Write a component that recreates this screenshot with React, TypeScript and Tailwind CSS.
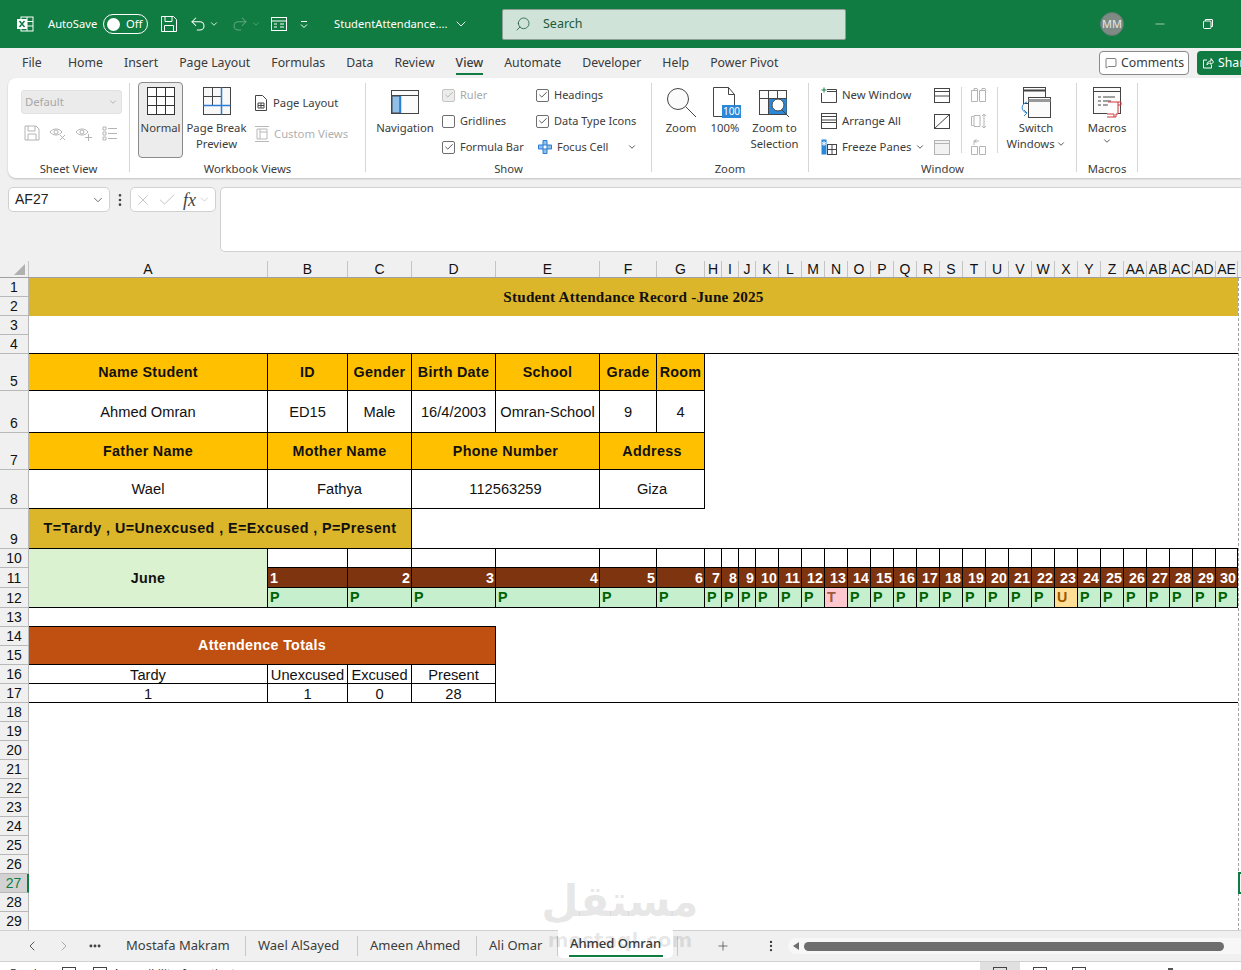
import { ChevronDown, ChevronLeft, ChevronRight, Check, X, Plus, Search, Undo2, Redo2, Minus, MoreHorizontal, MoreVertical, MessageSquare } from "lucide-react";
import type { ReactNode } from "react";

const tabs = ["Home", "Insert", "Page Layout", "Formulas", "Data", "Review", "View", "Automate", "Developer", "Help", "Power Pivot"];
const columns = ["A", "B", "C", "D", "E", "F", "G", "H", "I", "J", "K", "L", "M", "N", "O", "P", "Q", "R", "S", "T", "U", "V", "W", "X", "Y", "Z", "AA", "AB", "AC", "AD", "AE"];
const rowHeights = [19, 19, 19, 19, 37, 42, 37, 39, 40, 19, 20, 20, 19, 19, 19, 19, 19, 19, 19, 19, 19, 19, 19, 19, 19, 19, 19, 19, 19];
const days = Array.from({ length: 30 }, (_, i) => i + 1);
const sheets = [
  { name: "Mostafa Makram", width: "w-[132px]" },
  { name: "Wael AlSayed", width: "w-[112px]" },
  { name: "Ameen Ahmed", width: "w-[119px]" },
  { name: "Ali Omar", width: "w-[81px]" },
];

function Grey({ children }: { children: ReactNode }) {
  return <svg width="18" height="18" viewBox="0 0 18 18" fill="none" stroke="#b4b4b4" strokeWidth="1">{children}</svg>;
}

function Big({ icon, lines, className }: { icon: ReactNode; lines: ReactNode[]; className: string }) {
  return (
    <div className={`flex flex-col items-center pt-[4px] ${className}`}>
      <div className="h-[33px] flex items-start justify-center">{icon}</div>
      {lines.map((l, i) => (
        <div key={i} className="leading-[16px] whitespace-nowrap flex items-center">{l}</div>
      ))}
    </div>
  );
}

function Box({ checked, disabled }: { checked?: boolean; disabled?: boolean }) {
  return (
    <span className={`w-[13px] h-[13px] rounded-[2px] border flex items-center justify-center shrink-0 ${disabled ? "border-[#c4c4c4] bg-[#ececec] text-[#a8a8a8]" : "border-[#6e6e6e] text-[#333]"}`}>
      {checked && <Check size={10} strokeWidth={2} />}
    </span>
  );
}

function CheckRow({ label, checked, disabled }: { label: string; checked?: boolean; disabled?: boolean }) {
  return (
    <div className={`h-[26px] flex items-center gap-[5px] whitespace-nowrap text-[11px] ${disabled ? "text-[#a8a8a8]" : ""}`}>
      <Box checked={checked} disabled={disabled} />
      {label}
    </div>
  );
}

function Group({ label, className, children }: { label: string; className: string; children: ReactNode }) {
  return (
    <div className={`h-[89px] border-r border-[#d6d6d6] shrink-0 ${className}`}>
      <div className="h-[76px] flex">{children}</div>
      <div className="h-[18px] leading-[18px] pt-px text-center whitespace-nowrap">{label}</div>
    </div>
  );
}

function TitleBar() {
  return (
    <div className="h-[48px] bg-[#107c41] flex items-center text-white text-[11.200px] shrink-0">
      <svg className="ml-[16px] shrink-0" width="18" height="18" viewBox="0 0 18 18" fill="none">
        <rect x="5" y="2" width="12" height="14" fill="none" stroke="#fff" />
        <path d="M5 6.500h12M5 11h12M11 2v14" stroke="#fff" />
        <rect x="1" y="4" width="10" height="10" fill="#fff" />
        <path d="M3.500 6l5 6M8.500 6l-5 6" stroke="#107c41" strokeWidth="1.500" />
      </svg>
      <span className="ml-[14px] w-[55px] shrink-0">AutoSave</span>
      <div className="w-[45px] h-[20px] rounded-full border border-white flex items-center pl-[3px] shrink-0">
        <span className="w-[13px] h-[13px] rounded-full bg-white" />
        <span className="ml-[6px]">Off</span>
      </div>
      <svg className="ml-[12px] shrink-0" width="18" height="18" viewBox="0 0 18 18" fill="none" stroke="#fff">
        <path d="M1.500 1.500h12l3 3v12h-15z" />
        <path d="M5 1.500v5h7v-5M4.500 16.500v-6h9v6" />
      </svg>
      <Undo2 className="ml-[11px] shrink-0" size={18} strokeWidth={1.400} />
      <ChevronDown className="ml-[2px] shrink-0" size={10} />
      <Redo2 className="ml-[12px] text-[#5fa683] shrink-0" size={18} strokeWidth={1.400} />
      <ChevronDown className="ml-[2px] text-[#5fa683] shrink-0" size={10} />
      <svg className="ml-[9px] shrink-0" width="18" height="18" viewBox="0 0 18 18" fill="none" stroke="#fff">
        <rect x="1.500" y="2.500" width="15" height="13" />
        <path d="M1.500 6h15M4 9h3M10 9h4M4 12h3M10 12h4" />
      </svg>
      <svg className="ml-[10px] shrink-0" width="12" height="12" viewBox="0 0 12 12" fill="none" stroke="#fff">
        <path d="M3 3.500h6M3 6.500l3 3 3-3" />
      </svg>
      <span className="ml-[24px] w-[119px] shrink-0 whitespace-nowrap">StudentAttendance....</span>
      <ChevronDown className="shrink-0" size={16} strokeWidth={1.400} />
      <div className="ml-[33px] w-[344px] h-[31px] bg-[#cfe3d8] border border-[#8f9f97] rounded-[2px] flex items-center text-[#205a3c] text-[12.500px] shrink-0">
        <Search className="ml-[12px] -scale-x-100" size={16} strokeWidth={1.200} />
        <span className="ml-[12px]">Search</span>
      </div>
      <div className="ml-[254px] w-[24px] h-[24px] rounded-full bg-[#7f8a84] border border-[#5d7a69] flex items-center justify-center text-[11px] text-[#e6e6e6] shrink-0">MM</div>
      <Minus className="ml-[29px] shrink-0" size={14} strokeWidth={1} />
      <svg className="ml-[35px] shrink-0" width="12" height="12" viewBox="0 0 12 12" fill="none" stroke="#fff">
        <rect x="1.500" y="3" width="7.500" height="7.500" rx="1" />
        <path d="M3.500 3V1.500h6.500a.5.5 0 0 1 .5.5v6.500H9" />
      </svg>
    </div>
  );
}

function TabRow() {
  return (
    <div className="h-[30px] flex items-center text-[12.300px] text-[#3a3a3a] shrink-0">
      <span className="ml-[22px] w-[46px] shrink-0">File</span>
      <div className="flex gap-[21px] w-[1031px] h-[27px] self-start shrink-0">
        {tabs.map((t) => (
          <span key={t} className={`h-[27px] leading-[30px] ${t === "View" ? "border-b-[2px] border-[#107c41] font-medium" : ""}`}>{t}</span>
        ))}
      </div>
      <div className="h-[24px] w-[90px] bg-white border border-[#8a8a8a] rounded-[4px] flex items-center pl-[5px] gap-[4px] shrink-0">
        <MessageSquare size={12} strokeWidth={1.300} />
        Comments
      </div>
      <div className="ml-[8px] h-[24px] w-[60px] bg-[#107c41] rounded-l-[4px] flex items-center pl-[5px] gap-[4px] text-white shrink-0">
        <svg width="12" height="12" viewBox="0 0 12 12" fill="none" stroke="#fff"><path d="M5 3H1.500v8h8V8M5 8c0-3 2-4 4-4V1.500L11.500 5 9 7.500V6C7 6 5.500 7 5 8z" /></svg>
        Share
      </div>
    </div>
  );
}

function Ribbon() {
  return (
    <div className="ml-[8px] h-[100px] bg-white rounded-l-[8px] shadow-[0_1px_2px_rgba(0,0,0,0.2)] flex items-start pt-[5px] text-[11.300px] text-[#3c3c3c] font-normal shrink-0">
      <Group label="Sheet View" className="w-[122px]">
        <div>
          <div className="ml-[13px] mt-[7px] w-[101px] h-[24px] rounded-[3px] bg-[#ebebeb] border border-[#e2e2e2] text-[#a8a8a8] flex items-center justify-between px-[3px]">
            Default
            <ChevronDown size={10} />
          </div>
          <div className="mt-[8px] ml-[11px] flex">
            <div className="w-[26px] h-[22px] flex items-center justify-center"><Grey><path d="M2 2h11l3 3v11H2zM5 2v5h7V2M5 16v-6h8v6" /></Grey></div>
            <div className="w-[26px] h-[22px] flex items-center justify-center"><Grey><path d="M1 8c3-4 9-4 12 0-3 4-9 4-12 0z" /><circle cx="7" cy="8" r="2" /><path d="M11 11l5 5M16 11l-5 5" /></Grey></div>
            <div className="w-[26px] h-[22px] flex items-center justify-center"><Grey><path d="M1 8c3-4 9-4 12 0-3 4-9 4-12 0z" /><circle cx="7" cy="8" r="2" /><path d="M13.500 10v7M10 13.500h7" /></Grey></div>
            <div className="w-[26px] h-[22px] flex items-center justify-center"><Grey><path d="M2 3h3v3H2zM2 8h3v3H2zM2 13h3v3H2zM7 4.500h9M7 9.500h9M7 14.500h9" /></Grey></div>
          </div>
        </div>
      </Group>

      <Group label="Workbook Views" className="w-[236px]">
        <div className="ml-[8px] -mt-px w-[45px] h-[76px] shrink-0 bg-[#ececec] border border-[#8a8a8a] rounded-[4px] flex flex-col items-center pt-[4px]">
          <svg width="30" height="30" viewBox="0 0 30 30" fill="none" stroke="#333"><rect x="1.500" y=".5" width="27" height="27" fill="#fff" /><path d="M10.500 .5v27M19.500 .5v27M1.500 9.500h27M1.500 18.500h27" /></svg>
          <span className="mt-[3px] leading-[16px]">Normal</span>
        </div>
        <Big
          className="ml-[4px] w-[59px]"
          lines={["Page Break", "Preview"]}
          icon={<svg width="30" height="30" viewBox="0 0 30 30" fill="none" stroke="#444"><rect x="1.500" y=".5" width="27" height="27" fill="#f8f8f8" /><path d="M10.500 .5v18M1.500 9.500h18" /><path d="M19.500 .5v27M1.500 18.500h27" stroke="#2b7cd3" strokeWidth="1.500" /></svg>}
        />
        <div className="ml-[9px] mt-[7px]">
          <div className="h-[26px] flex items-center gap-[6px] whitespace-nowrap">
            <svg width="12" height="16" viewBox="0 0 12 16" fill="none" stroke="#444"><path d="M.5.500h7l4 4v11H.5z" /><path d="M3 8h6v5H3zM6 8v5M3 10.500h6" /></svg>
            Page Layout
          </div>
          <div className="h-[26px] flex items-center gap-[4px] text-[#b0b0b0] -ml-[1px] mt-[5px] whitespace-nowrap">
            <svg width="16" height="18" viewBox="0 0 16 18" fill="none" stroke="#b8b8b8"><path d="M1 1.500h14M1 16.500h14M3 4h10v10H3zM6 4v10M6 7h7" /></svg>
            Custom Views
          </div>
        </div>
      </Group>

      <Group label="Show" className="w-[286px]">
        <Big
          className="ml-[10px] w-[58px]"
          lines={["Navigation"]}
          icon={<svg className="mt-[3px]" width="28" height="24" viewBox="0 0 28 24" fill="none" stroke="#444"><rect x=".5" y=".5" width="27" height="23" fill="#fbfbfb" /><path d="M.5 5.500h27" /><rect x="1" y="6" width="8" height="17" fill="#8fc0ea" /><path d="M9.500 6v17" stroke="#2b7cd3" strokeWidth="1.500" /></svg>}
        />
        <div className="ml-[8px] -mt-px w-[94px]">
          <CheckRow label="Ruler" checked disabled />
          <CheckRow label="Gridlines" />
          <CheckRow label="Formula Bar" checked />
        </div>
        <div className="-mt-px">
          <CheckRow label="Headings" checked />
          <CheckRow label="Data Type Icons" checked />
          <div className="h-[26px] flex items-center gap-[5px] ml-[2px] text-[11px] whitespace-nowrap">
            <svg width="14" height="14" viewBox="0 0 14 14" fill="#8fc0ea" stroke="#2b7cd3"><path d="M5 .5h4V5h4.500v4H9v4.500H5V9H.5V5H5z" /><path d="M5 5h4v4H5z" fill="#fff" /></svg>
            Focus Cell
            <ChevronDown className="ml-[14px]" size={10} />
          </div>
        </div>
      </Group>

      <Group label="Zoom" className="w-[157px]">
        <Big
          className="ml-[9px] w-[40px]"
          lines={["Zoom"]}
          icon={<svg width="32" height="32" viewBox="0 0 32 32" fill="none" stroke="#444"><circle cx="13" cy="12" r="10.500" fill="#fbfbfb" /><path d="M20.500 19.500L31 30" /></svg>}
        />
        <Big
          className="ml-[8px] w-[32px]"
          lines={["100%"]}
          icon={<div className="relative ml-[4px] w-[28px] h-[31px]"><svg width="28" height="31" viewBox="0 0 28 31" fill="none" stroke="#444"><path d="M.5.500h15l6 7v22H.5z" /><path d="M15.500.500v7h6" /></svg><span className="absolute right-0 bottom-0 w-[19px] h-[13px] bg-[#2b88d8] text-white text-[10px] leading-[13px] text-center">100</span></div>}
        />
        <Big
          className="ml-[10px] w-[47px]"
          lines={["Zoom to", "Selection"]}
          icon={<svg className="mt-[3px]" width="32" height="28" viewBox="0 0 32 28" fill="none" stroke="#444"><rect x=".5" y=".5" width="27" height="24" fill="#fbfbfb" /><path d="M9.500 .5v24M18.500 .5v24M.5 8.500h27" /><rect x="10" y="9" width="17.500" height="15" fill="#2b88d8" stroke="none" /><circle cx="19" cy="15" r="6" fill="#fff" /><path d="M23 20l7 7" /></svg>}
        />
      </Group>

      <Group label="Window" className="w-[268px]">
        <div className="ml-[12px] -mt-px w-[105px] shrink-0">
          <div className="h-[26px] flex items-center gap-[5px] whitespace-nowrap">
            <svg width="16" height="16" viewBox="0 0 16 16" fill="none" stroke="#444"><path d="M6 2.500h9.500v13H.5V6" /><path d="M6 4.500h9.500" /><path d="M3 .5v5M.5 3h5" stroke="#107c41" /></svg>
            New Window
          </div>
          <div className="h-[26px] flex items-center gap-[5px] whitespace-nowrap">
            <svg width="16" height="16" viewBox="0 0 16 16" fill="none" stroke="#444"><rect x=".5" y=".5" width="15" height="15" /><path d="M.5 3.500h15M.5 7h15M.5 9.500h15" /></svg>
            Arrange All
          </div>
          <div className="h-[26px] flex items-center gap-[5px] whitespace-nowrap">
            <svg width="16" height="16" viewBox="0 0 16 16" fill="none" stroke="#444"><rect x="6.500" y="5.500" width="9" height="10" /><path d="M11 5.500v10M6.500 10.500h9" /><rect x=".5" y=".5" width="5" height="15" fill="#2b88d8" stroke="none" /><path d="M3 2v5M1 3.500l4 2M5 3.500l-4 2" stroke="#fff" /></svg>
            Freeze Panes
            <ChevronDown className="-ml-[2px]" size={10} />
          </div>
        </div>
        <div className="ml-[8px] -mt-px w-[16px] shrink-0">
          <div className="h-[26px] flex items-center"><svg width="16" height="15" viewBox="0 0 16 15" fill="none" stroke="#444"><rect x=".5" y=".5" width="15" height="14" /><path d="M.5 3.500h15M.5 8h15" /></svg></div>
          <div className="h-[26px] flex items-center"><svg width="16" height="15" viewBox="0 0 16 15" fill="none" stroke="#444"><rect x=".5" y=".5" width="15" height="14" /><path d="M.5 14.500l15-14" /></svg></div>
          <div className="h-[26px] flex items-center"><svg width="16" height="15" viewBox="0 0 16 15" fill="#f2f2f2" stroke="#b4b4b4"><rect x=".5" y=".5" width="15" height="14" /><path d="M.5 3.500h15" /></svg></div>
        </div>
        <div className="ml-[11px] w-px h-[66px] mt-[4px] bg-[#d6d6d6] shrink-0" />
        <div className="ml-[9px] -mt-px w-[16px] shrink-0">
          <div className="h-[26px] flex items-center"><svg width="16" height="14" viewBox="0 0 16 14" fill="none" stroke="#b4b4b4"><path d="M.5 2.500h6v11h-6zM8.500 2.500h6v11h-6zM3 2.500V.5h3l1 2M11 2.500V.5h3l1 2" /></svg></div>
          <div className="h-[26px] flex items-center"><svg width="16" height="16" viewBox="0 0 16 16" fill="none" stroke="#b4b4b4"><path d="M2.500 3.500h-2v9h2M3 2.500h6v11H3zM13 1v14M11 3l2-2 2 2M11 13l2 2 2-2" /></svg></div>
          <div className="h-[26px] flex items-center"><svg width="16" height="16" viewBox="0 0 16 16" fill="none" stroke="#b4b4b4"><path d="M.5 7.500h6v8h-6zM8.500 7.500h6v8h-6zM3 6V2h5M5.500.5L3 2M5.500 3.500L3 2" /></svg></div>
        </div>
        <div className="ml-[10px] w-px h-[66px] mt-[4px] bg-[#d6d6d6] shrink-0" />
        <Big
          className="ml-[8px] w-[60px]"
          lines={["Switch", <>Windows<ChevronDown className="ml-[1px]" size={10} /></>]}
          icon={<svg width="32" height="32" viewBox="0 0 32 32" fill="none" stroke="#444"><rect x="3.500" y=".5" width="22" height="16" fill="#fbfbfb" /><path d="M3.500 3.500h22" strokeWidth="2" /><rect x="8.500" y="10.500" width="22" height="20" fill="#fbfbfb" /><path d="M8.500 13.500h22" strokeWidth="3" stroke="#999" /><path d="M7 15C1 17 0 24 7 26M4 23l3 3-3 3" stroke="#2b88d8" /></svg>}
        />
      </Group>

      <Group label="Macros" className="w-[61px]">
        <Big
          className="ml-[10px] w-[40px]"
          lines={["Macros", <ChevronDown size={10} />]}
          icon={<svg width="32" height="32" viewBox="0 0 32 32" fill="none" stroke="#444"><rect x="2.500" y=".5" width="27" height="26" fill="#fbfbfb" /><path d="M2.500 4.500h27M7 10h3M12 10h12M7 14h3M12 14h8M7 18h3M12 18h6" /><path d="M17 15h10v12h-2v3h-9" stroke="#d13438" fill="#fff" /><path d="M27 15h3v3h-3M16 27h7v3" stroke="#d13438" /></svg>}
        />
      </Group>
    </div>
  );
}

function FormulaBar() {
  return (
    <div className="mt-[9px] h-[64px] flex items-start shrink-0 text-[#222]">
      <div className="ml-[8px] w-[102px] h-[25px] bg-white border border-[#d0d0d0] rounded-[5px] flex items-center justify-between pl-[6px] pr-[4px] text-[14px] font-['Liberation_Sans',sans-serif]">
        AF27
        <ChevronDown size={14} strokeWidth={1.300} className="text-[#444]" />
      </div>
      <MoreVertical className="mt-[5px] ml-[2px] text-[#444]" size={16} strokeWidth={2} />
      <div className="ml-[2px] w-[86px] h-[25px] bg-white border border-[#d0d0d0] rounded-[5px] flex items-center text-[#bdbdbd] pl-[3px]">
        <X size={18} strokeWidth={1.100} />
        <Check className="ml-[5px]" size={20} strokeWidth={1.100} />
        <span className="ml-[6px] font-['Liberation_Serif',serif] italic text-[18px] leading-none text-[#444]">fx</span>
        <ChevronDown className="ml-[2px]" size={13} strokeWidth={1.200} />
      </div>
      <div className="ml-[4px] flex-1 h-[65px] bg-white border border-[#d0d0d0] rounded-l-[5px] border-r-0" />
    </div>
  );
}

function Cell({ children, className = "" }: { children?: ReactNode; className?: string }) {
  return <div className={`border-r border-b border-black flex items-center justify-center whitespace-nowrap overflow-hidden pt-[2px] ${className}`}>{children}</div>;
}

function Sheet() {
  const head = "font-bold text-[14.300px] tracking-[0.3px] bg-[#ffc000]";
  const plain = "!pt-0";
  return (
    <div className="mt-[10px] h-[669px] overflow-hidden shrink-0 font-['Liberation_Sans',sans-serif] text-[14.670px] text-[#111] bg-white">
      <div className="flex h-[17px] bg-[#f0f0f0] border-b border-[#a0a0a0]">
        <div className="w-[29px] border-r border-[#c4c4c4] flex items-end justify-end pr-[3px] pb-[2px] shrink-0">
          <svg width="11" height="11" viewBox="0 0 11 11"><path d="M11 0v11H0z" fill="#b0b0b0" /></svg>
        </div>
        <div className="grid grid-cols-[239px_80px_64px_84px_104px_57px_48px_17px_17px_17px_repeat(20,23px)_22px] leading-[16px] text-center text-[14px]">
          {columns.map((c) => (
            <div key={c} className="border-r border-[#c4c4c4] overflow-hidden">{c}</div>
          ))}
        </div>
      </div>
      <div className="flex">
        <div className="w-[29px] shrink-0 flex flex-col text-[14px] bg-[#f0f0f0]">
          {rowHeights.map((h, i) => (
            <div
              key={i}
              style={{ height: h }}
              className={`border-r border-b border-[#b8b8b8] flex items-end justify-center leading-[17px] ${i === 26 ? "bg-[#d2d2d2] text-[#107c41] border-r-[2px] border-r-[#107c41]" : ""}`}
            >
              {i + 1}
            </div>
          ))}
        </div>
        <div className="grid grid-cols-[239px_80px_64px_84px_104px_57px_48px_17px_17px_17px_repeat(20,23px)_22px] grid-rows-[19px_19px_19px_19px_37px_42px_37px_39px_40px_19px_20px_20px_19px_19px_19px_19px_19px_repeat(12,19px)]">
          <div className="col-span-31 row-span-2 bg-[#dbb52a] flex items-center justify-center font-['Liberation_Serif',serif] font-bold text-[15.200px] whitespace-nowrap tracking-[0.2px]">
            Student Attendance Record -June 2025
          </div>
          <div className="col-span-31 row-span-2 border-b border-black" />

          <Cell className={head}>Name Student</Cell>
          <Cell className={head}>ID</Cell>
          <Cell className={head}>Gender</Cell>
          <Cell className={head}>Birth Date</Cell>
          <Cell className={head}>School</Cell>
          <Cell className={head}>Grade</Cell>
          <Cell className={head}>Room</Cell>
          <div className="col-span-24 row-span-4" />

          <Cell className={plain}>Ahmed Omran</Cell>
          <Cell className={plain}>ED15</Cell>
          <Cell className={plain}>Male</Cell>
          <Cell className={plain}>16/4/2003</Cell>
          <Cell className={plain}>Omran-School</Cell>
          <Cell className={plain}>9</Cell>
          <Cell className={plain}>4</Cell>

          <Cell className={head}>Father Name</Cell>
          <Cell className={`col-span-2 ${head}`}>Mother Name</Cell>
          <Cell className={`col-span-2 ${head}`}>Phone Number</Cell>
          <Cell className={`col-span-2 ${head}`}>Address</Cell>

          <Cell className={plain}>Wael</Cell>
          <Cell className={`col-span-2 ${plain}`}>Fathya</Cell>
          <Cell className={`col-span-2 ${plain}`}>112563259</Cell>
          <Cell className={`col-span-2 ${plain}`}>Giza</Cell>

          <Cell className="col-span-3 !pt-0 bg-[#dbb52a] font-bold text-[14.300px] tracking-[0.45px]">T=Tardy , U=Unexcused , E=Excused , P=Present</Cell>
          <div className="col-span-28 border-b border-black" />

          <Cell className="row-span-3 bg-[#dbf2d0] font-bold text-[14.300px] tracking-[0.3px]">June</Cell>
          {days.map((d) => (
            <Cell key={d} />
          ))}
          {days.map((d) => (
            <Cell key={d} className={`bg-[#7f3410] text-white font-bold text-[14.300px] ${d === 1 ? "!justify-start pl-[2px]" : "!justify-end pr-[1px]"}`}>{d}</Cell>
          ))}
          {days.map((d) => (
            <Cell
              key={d}
              className={`!pt-0 font-bold text-[14.300px] !justify-start pl-[2px] ${d === 13 ? "bg-[#ffc7ce] text-[#9c5a3c]" : d === 23 ? "bg-[#ffdf96] text-[#9c5700]" : "bg-[#c6efce] text-[#006100]"}`}
            >
              {d === 13 ? "T" : d === 23 ? "U" : "P"}
            </Cell>
          ))}

          <div className="col-span-4 border-b border-black" />
          <div className="col-span-27" />

          <Cell className="col-span-4 row-span-2 !pt-0 bg-[#c05011] text-white font-bold text-[14.300px] tracking-[0.3px]">Attendence Totals</Cell>
          <div className="col-span-27 row-span-2" />

          <Cell>Tardy</Cell>
          <Cell>Unexcused</Cell>
          <Cell>Excused</Cell>
          <Cell>Present</Cell>
          <div className="col-span-27" />

          <Cell>1</Cell>
          <Cell>1</Cell>
          <Cell>0</Cell>
          <Cell>28</Cell>
          <div className="col-span-27 border-b border-black" />

          <div className="col-span-31 row-span-12" />
        </div>
        <div className="w-[3px] h-[653px] border-l border-dashed border-[#a0a0a0] flex flex-col">
          <div className="h-[594px] shrink-0" />
          <div className="h-[22px] border-2 border-r-0 border-[#107c41] -ml-px shrink-0" />
        </div>
      </div>
    </div>
  );
}

function BottomBar() {
  return (
    <div className="h-[32px] bg-[#f0f0f0] border-y border-[#d0d0d0] flex items-center text-[13px] text-[#3c3c3c] shrink-0">
      <ChevronLeft className="ml-[24px] shrink-0" size={16} strokeWidth={1.300} />
      <ChevronRight className="ml-[16px] text-[#a0a0a0] shrink-0" size={16} strokeWidth={1.300} />
      <MoreHorizontal className="ml-[16px] shrink-0" size={14} strokeWidth={3} />
      <div className="ml-[12px] flex items-center shrink-0">
        {sheets.map((s) => (
          <div key={s.name} className={`${s.width} h-[20px] flex items-center pl-[12px] border-r border-[#c8c8c8] whitespace-nowrap`}>{s.name}</div>
        ))}
      </div>
      <div className="w-[115px] h-[28px] -mt-[4px] bg-white rounded-b-[5px] flex flex-col items-center font-medium shrink-0">
        <span className="leading-[24px] mt-[1px]">Ahmed Omran</span>
        <span className="w-[94px] h-[2px] bg-[#107c41]" />
      </div>
      <div className="ml-[4px] h-[20px] w-px bg-[#c8c8c8] shrink-0" />
      <Plus className="ml-[38px] shrink-0" size={14} strokeWidth={1.200} />
      <MoreVertical className="ml-[34px] shrink-0" size={14} strokeWidth={2} />
      <div className="ml-[10px] flex-1 h-[16px] bg-[#f7f7f7] rounded-l-full flex items-center pl-[5px]">
        <span className="w-0 h-0 border-y-[4px] border-y-transparent border-r-[6px] border-r-[#6e6e6e]" />
        <span className="ml-[5px] w-[420px] h-[9px] rounded-full bg-[#6e6e6e]" />
      </div>
    </div>
  );
}

function StatusBar() {
  return (
    <div className="h-[8px] bg-white flex text-[11.300px] text-[#333] overflow-hidden shrink-0">
      <span className="ml-[10px] w-[52px] mt-[3px] leading-[16px] shrink-0">Ready</span>
      <span className="mt-[5px] w-[14px] h-[10px] border border-[#444] shrink-0" />
      <span className="ml-[17px] mt-[5px] w-[14px] h-[10px] border border-[#444] shrink-0" />
      <span className="ml-[6px] w-[117px] mt-[3px] leading-[16px] whitespace-nowrap shrink-0">Accessibility: Investigate</span>
      <div className="ml-[750px] w-[40px] h-[8px] bg-[#e0e0e0] flex justify-center shrink-0">
        <span className="mt-[5px] w-[14px] h-[10px] border border-[#444]" />
      </div>
      <span className="ml-[13px] mt-[5px] w-[14px] h-[10px] border border-[#444] shrink-0" />
      <span className="ml-[25px] mt-[5px] w-[14px] h-[10px] border border-[#444] shrink-0" />
      <span className="ml-[82px] mt-[6px] w-[5px] h-[4px] bg-[#555] shrink-0" />
    </div>
  );
}

export default function App() {
  return (
    <div className="relative w-[1241px] h-[970px] overflow-hidden bg-[#f0f0f0] font-['Noto_Sans',sans-serif] flex flex-col">
      <TitleBar />
      <TabRow />
      <Ribbon />
      <FormulaBar />
      <Sheet />
      <BottomBar />
      <StatusBar />
      <div className="absolute left-[540px] top-[870px] w-[160px] text-center text-black/10 font-['DejaVu_Sans',sans-serif] pointer-events-none">
        <div className="text-[43px] font-bold leading-[62px]">مستقل</div>
        <div className="text-[20px] font-bold leading-[20px] -mt-[2px]">mostaql.com</div>
      </div>
    </div>
  );
}
